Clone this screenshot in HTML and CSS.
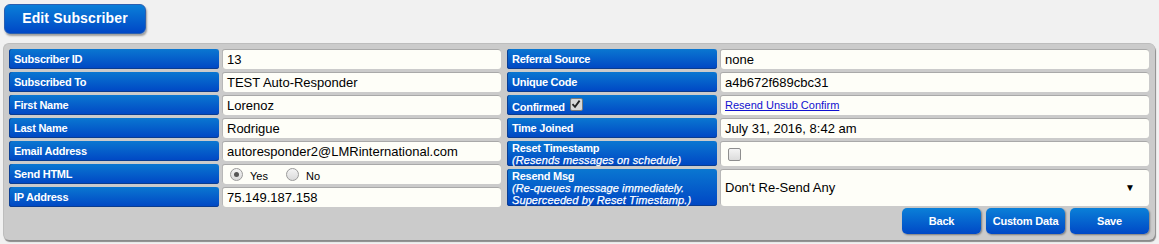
FILE: index.html
```html
<!DOCTYPE html>
<html>
<head>
<meta charset="utf-8">
<link rel="stylesheet" href="styles.css">
</head>
<body>
<div class="title">Edit Subscriber</div>
<div class="panel">
  <div class="cols">
    <div class="grid left">
      <div class="lbl">Subscriber ID</div><div class="val">13</div>
      <div class="lbl">Subscribed To</div><div class="val">TEST Auto-Responder</div>
      <div class="lbl">First Name</div><div class="val">Lorenoz</div>
      <div class="lbl">Last Name</div><div class="val">Rodrigue</div>
      <div class="lbl">Email Address</div><div class="val">autoresponder2@LMRinternational.com</div>
      <div class="lbl">Send HTML</div>
      <div class="val radios"><span class="radio on"></span><span class="rtxt">Yes</span><span class="radio"></span><span class="rtxt">No</span></div>
      <div class="lbl">IP Address</div><div class="val">75.149.187.158</div>
    </div>
    <div class="grid right">
      <div class="lbl">Referral Source</div><div class="val">none</div>
      <div class="lbl">Unique Code</div><div class="val">a4b672f689cbc31</div>
      <div class="lbl conf">Confirmed <span class="cbox on"><svg width="10" height="10" viewBox="0 0 10 10"><path d="M1.5 5.2 L4 7.8 L8.6 1.6" fill="none" stroke="#222" stroke-width="1.8"/></svg></span></div>
      <div class="val"><a class="link" href="#">Resend Unsub Confirm</a></div>
      <div class="lbl">Time Joined</div><div class="val">July 31, 2016, 8:42 am</div>
      <div class="lbl multi">Reset Timestamp<span class="note">(Resends messages on schedule)</span></div>
      <div class="val"><span class="cbox"></span></div>
      <div class="lbl multi">Resend Msg<span class="note">(Re-queues message immediately.</span><span class="note">Superceeded by Reset Timestamp.)</span></div>
      <div class="val sel"><span>Don't Re-Send Any</span><span class="arrow">▼</span></div>
    </div>
  </div>
  <div class="actions">
    <div class="btn">Back</div>
    <div class="btn">Custom Data</div>
    <div class="btn">Save</div>
  </div>
</div>
</body>
</html>
```
FILE: styles.css
```css
html, body {
  margin: 0;
  padding: 0;
}
body {
  background: #f1f1f1;
  font-family: "Liberation Sans", Arial, sans-serif;
  width: 1159px;
  height: 244px;
  overflow: hidden;
}
.title {
  margin: 4px 0 0 4px;
  width: 142px;
  height: 30px;
  box-sizing: border-box;
  border-radius: 6px;
  background: linear-gradient(#0a7fd8, #0047c6);
  color: #fff;
  font-weight: bold;
  font-size: 14px;
  letter-spacing: 0.15px;
  text-align: center;
  line-height: 27px;
  box-shadow: 1px 2px 2px rgba(0,0,0,0.35);
  border: 1px solid #2a5fb0;
}
.panel {
  margin: 9px 0 0 3px;
  width: 1152px;
  height: 197px;
  box-sizing: border-box;
  background: #cbcbcb;
  border-radius: 6px;
  border-top: 1px solid #bdbdbd;
  border-left: 1px solid #bdbdbd;
  box-shadow: 1px 2px 1px #8a8a8a;
  padding: 5px 5px 0 5px;
}
.cols {
  display: flex;
  gap: 6px;
}
.grid {
  display: grid;
  column-gap: 3px;
  row-gap: 3px;
}
.left {
  grid-template-columns: 210px 279px;
  grid-template-rows: repeat(7, 20px);
}
.right {
  grid-template-columns: 210px 429px;
  grid-template-rows: 20px 20px 20px 20px 25px 37px;
}
.lbl {
  background: linear-gradient(#0a77d1, #0046c4);
  color: #fff;
  font-weight: bold;
  font-size: 11px;
  letter-spacing: -0.25px;
  border-radius: 3px;
  padding: 0 5px;
  display: flex;
  align-items: center;
  box-shadow: inset 1px 0 0 #0b3e93, inset 0 -1px 0 #0a3c8f;
}
.lbl.multi {
  flex-direction: column;
  align-items: flex-start;
  justify-content: flex-start;
  padding-top: 1px;
  line-height: 12px;
}
.note {
  font-style: italic;
  font-weight: normal;
  font-size: 11px;
  -webkit-text-stroke: 0.25px #fff;
  letter-spacing: 0.1px;
}
.lbl.conf {
  padding-top: 3px;
}
.val {
  background: #fefef8;
  border-radius: 3px;
  box-shadow: inset 0 1px 0 #a9a9a9, inset 1px 0 0 #b8b8b8;
  font-size: 13px;
  color: #000;
  padding: 0 5px;
  display: flex;
  align-items: center;
}
.link {
  color: #1010d0;
  font-size: 11px;
  letter-spacing: 0;
  text-decoration: underline;
}
.cbox {
  display: inline-block;
  width: 11px;
  height: 11px;
  border: 1px solid #8e8e8e;
  border-radius: 2px;
  background: linear-gradient(#f4f4f4, #dcdcdc);
  margin-left: 3px;
  position: relative;
  top: 1px;
}
.cbox svg {
  position: absolute;
  left: 0;
  top: 0;
}
.cbox.on {
  background: #d8d8d8;
  margin-left: 5px;
  top: -2px;
  border-color: #7a7a7a;
}
.radios {
  padding-left: 8px;
}
.radio {
  display: inline-block;
  width: 11px;
  height: 11px;
  border-radius: 50%;
  border: 1px solid #9a9a9a;
  background: linear-gradient(#f4f4f4, #dadada);
  position: relative;
}
.radio.on::after {
  content: "";
  position: absolute;
  left: 3px;
  top: 3px;
  width: 5px;
  height: 5px;
  border-radius: 50%;
  background: #555;
}
.rtxt {
  font-size: 11px;
  margin: 3px 0 0 7px;
  width: 36px;
}
.sel {
  justify-content: space-between;
  padding-right: 14px;
}
.arrow {
  font-size: 10px;
}
.actions {
  display: flex;
  justify-content: flex-end;
  gap: 5px;
  margin-top: 1px;
  padding-right: 1px;
}
.btn {
  width: 79px;
  height: 26px;
  box-sizing: border-box;
  border-radius: 5px;
  background: linear-gradient(#0a80d8, #0048c6);
  color: #fff;
  font-weight: bold;
  font-size: 11px;
  letter-spacing: -0.2px;
  display: flex;
  align-items: center;
  justify-content: center;
  box-shadow: 1px 1px 2px rgba(0,0,0,0.4);
}
```
